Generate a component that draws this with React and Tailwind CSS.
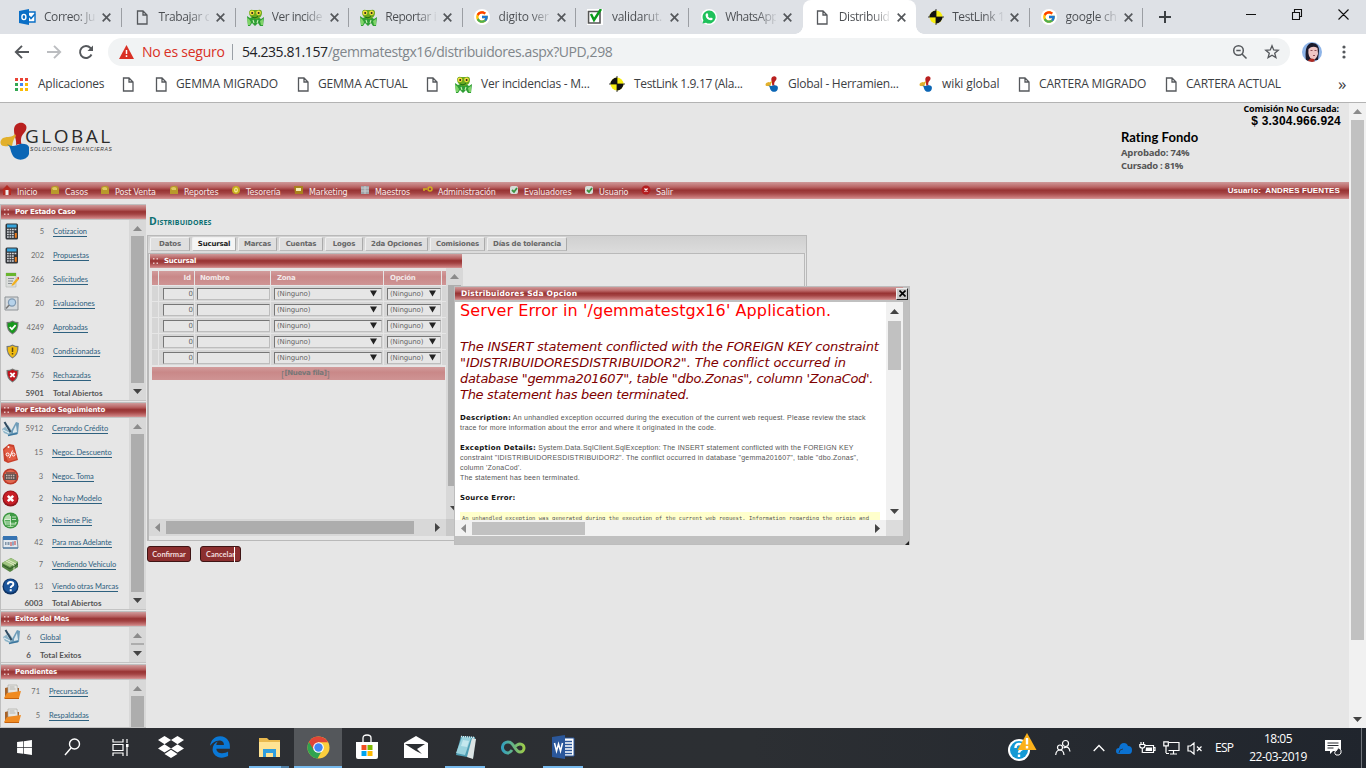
import React from "react";
import { FcGoogle } from "react-icons/fc";
import { FaDropbox, FaEdgeLegacy, FaWindows } from "react-icons/fa";

const BAR = "bg-[linear-gradient(to_bottom,#cf9a9a_0%,#b96464_30%,#983333_48%,#a34343_65%,#c87878_90%,#d49a9a_100%)]";

/* ---------- small drawings ---------- */

const Page = ({ className = "" }) => (
  <svg className={"shrink-0 " + className} width="12" height="15" viewBox="0 0 12 15" fill="none" stroke="#55585c" strokeWidth="1.3">
    <path d="M1.500 1h5.500l4 4v9H1.500zM7 1v4h4" />
  </svg>
);

const Frog = () => (
  <svg className="shrink-0" width="17" height="17" viewBox="0 0 17 17">
    <path d="M0 7l3 2 2-1h6l3 2 3-2-1 9h-3l-2-3-3 3-3-3-2 3H1z" fill="#2f9e35" />
    <path d="M0 9l2 1 2 3-1 3H1zM16 10l-3 2 1 4h2z" fill="#7fd469" />
    <path d="M2 3q1-3 4-2h5q4-1 4 3 0 5-6 6Q2 9 2 3z" fill="#6aa81e" />
    <circle cx="5" cy="3.8" r="2.400" fill="#f3dd3c" />
    <circle cx="11.500" cy="3.800" r="2.400" fill="#f3dd3c" />
    <circle cx="5.200" cy="4" r="1" fill="#222" />
    <circle cx="11.600" cy="4" r="1" fill="#222" />
    <path d="M5 8q3 2 6-.5" stroke="#176b17" fill="none" />
    <path d="M6 11l1 3M11 11l-1 3" stroke="#c9f0b8" strokeWidth="1.100" />
  </svg>
);

const Outlook = () => (
  <svg className="shrink-0" width="17" height="16" viewBox="0 0 17 16">
    <path d="M9 3h7v10H9z" fill="#fff" stroke="#0a6fc6" strokeWidth="1.4" />
    <path d="M10 7l2 2.5L16 5" stroke="#0a6fc6" strokeWidth="1.6" fill="none" />
    <path d="M0 2l10-2v16L0 14z" fill="#0a6fc6" />
    <ellipse cx="4.9" cy="8" rx="2" ry="2.6" fill="none" stroke="#fff" strokeWidth="1.4" />
  </svg>
);

const CheckIcon = () => (
  <svg className="shrink-0" width="16" height="16" viewBox="0 0 16 16">
    <path d="M0 0h16v16H0z" fill="#fff" />
    <path d="M1.5 2.5h11.5v11.500H1.500z" fill="#fff" stroke="#555" strokeWidth="1.6" />
    <path d="M4 5l3 6 7-11" fill="none" stroke="#0a9a1a" strokeWidth="2.4" />
  </svg>
);

const Whats = () => (
  <svg className="shrink-0" width="16" height="16" viewBox="0 0 16 16">
    <circle cx="8" cy="8" r="8" fill="#fff" />
    <path d="M8 1.500a6.500 6.500 0 1 1-3 12.200L1.500 14.500l.9-3.300A6.500 6.500 0 0 1 8 1.500z" fill="#1fc15b" />
    <path d="M5.200 4.500l1.300-.3.900 2-.7.900q.8 1.500 2.300 2.200l.9-.9 1.900 1q-.2 1.800-2 1.900Q5 10.500 4.600 6.200q0-1.200.6-1.700z" fill="#fff" />
  </svg>
);

const Target = () => (
  <svg className="shrink-0" width="16" height="16" viewBox="0 0 16 16">
    <circle cx="8" cy="8" r="6.500" fill="#f7ee12" />
    <path d="M8 8V1.500A6.500 6.500 0 0 0 1.500 8zM8 8v6.500A6.500 6.500 0 0 0 14.500 8z" fill="#111" />
    <path d="M8 0v16M0 8h16" stroke="#111" strokeWidth=".8" />
  </svg>
);

const GoogleIcon = () => (
  <span className="flex size-4 shrink-0 items-center justify-center rounded-full bg-white">
    <FcGoogle size={14} />
  </span>
);

const GlobalMark = ({ w = 15, h = 16 }) => (
  <svg className="shrink-0" width={w} height={h} viewBox="0 0 29 38">
    <path d="M14 8C14 2 19 0 23 1c5 2 4 7 1 10-3 3-4 7-2 13-2-2-4-2-6-1 1-5-2-9-2-15z" fill="#b9201f" />
    <path d="M15 12C12 16 8 14 3 16c-4 3-3 8 1 8 4 1 5-1 8 0 1-5 2-8 4-10z" fill="#e2b02c" />
    <path d="M7 22c4 3 9 2 13 0 9-1 11 4 9 10-2 7-14 8-17 0-2-4-1-7-5-10z" fill="#0b66b5" />
  </svg>
);

const Close = () => (
  <svg className="shrink-0" width="9" height="9" viewBox="0 0 9 9" stroke="#55585c" strokeWidth="1.7">
    <path d="M.7.7l7.600 7.600M8.300.7L.7 8.300" />
  </svg>
);

/* ---------- browser chrome ---------- */

const TABS = [
  ["Correo: Ju", Outlook, "tracking-[-0.45px]"],
  ["Trabajar c", Page, "tracking-[-0.4px]"],
  ["Ver incide", Frog, "tracking-[-0.5px]"],
  ["Reportar i", Frog, "tracking-[-0.45px]"],
  ["digito ver", GoogleIcon, "tracking-[-0.2px]"],
  ["validarut.", CheckIcon, "tracking-[-0.25px]"],
  ["WhatsApp", Whats, "tracking-[-0.6px]"],
  ["Distribuido", Page, "tracking-[-0.4px]", true],
  ["TestLink 1", Target, "tracking-[-0.4px]"],
  ["google ch", GoogleIcon, "tracking-[-0.25px]"],
];

function TabStrip() {
  return (
    <div className="flex h-[34px] shrink-0 bg-[#dee1e6] pl-[9px] font-['Open_Sans',sans-serif]">
      {TABS.map(([label, Icon, track, active], i) => (
        <div
          key={i}
          className={
            "relative flex h-[34px] w-[113.4px] shrink-0 items-center pl-[10px] " +
            (active ? "rounded-t-lg bg-white" : "")
          }
        >
          <span className={"flex w-[17px] justify-center " + (i > 0 ? "ml-px" : "")}><Icon /></span>
          <span className={"ml-[8px] w-[51px] overflow-hidden whitespace-nowrap bg-[linear-gradient(to_right,#4a4d51_62%,rgba(74,77,81,0.1))] bg-clip-text text-[12px] leading-[18px] text-transparent " + track}>
            {label}
          </span>
          <span className="ml-[7px]"><Close /></span>
          {!active && i !== 6 && <span className="absolute right-[0px] top-[8px] h-[19px] w-px bg-[#9b9ea3]" />}
          {active && (
            <>
              <span className="absolute -left-2 bottom-0 size-2 bg-[radial-gradient(circle_at_0_0,#dee1e6_7.5px,#fff_8px)]" />
              <span className="absolute -right-2 bottom-0 size-2 bg-[radial-gradient(circle_at_100%_0,#dee1e6_7.5px,#fff_8px)]" />
            </>
          )}
        </div>
      ))}
      <svg className="ml-[16px] mt-[11px]" width="12" height="12" stroke="#3c4043" strokeWidth="2">
        <path d="M6 0v12M0 6h12" />
      </svg>
      <svg className="ml-auto mr-[16px] mt-[9px]" width="104" height="12" fill="none" stroke="#111" strokeWidth="1.1">
        <path d="M0 5.500h10M46.500 3.500h7v7h-7zM48.500 3V.500h7v7h-2.500M92.500.5l10 10M102.500.5l-10 10" />
      </svg>
    </div>
  );
}

function Toolbar() {
  return (
    <div className="flex h-[36px] shrink-0 items-center bg-white font-['Open_Sans',sans-serif]">
      <svg className="ml-[14px] shrink-0" width="82" height="16" viewBox="0 0 82 16" fill="none" strokeWidth="1.9">
        <path d="M15 8H2M8 1.800L1.800 8 8 14.200" stroke="#55585c" />
        <path d="M33 8h13M40 1.800L46.200 8 40 14.200" stroke="#bbbdc0" />
        <path d="M77.500 10.500A6 6 0 1 1 76.500 4l1.500 1.600" stroke="#55585c" />
        <path d="M79 1.500v5.500h-5.500z" fill="#55585c" stroke="none" />
      </svg>
      <div className="ml-[12px] flex h-[28px] w-[1182px] items-center rounded-full bg-[#f1f3f4] pl-[11px] text-[14px] leading-[20px]">
        <svg className="shrink-0" width="15" height="14" viewBox="0 0 15 14">
          <path d="M7.500 0L15 14H0z" fill="#d93025" />
          <path d="M7.500 5v4M7.500 10.300v1.600" stroke="#fff" strokeWidth="1.500" />
        </svg>
        <span className="ml-[8px] w-[90px] whitespace-nowrap tracking-[-0.25px] text-[#d93025]">No es seguro</span>
        <span className="h-[16px] w-px bg-[#9aa0a6]" />
        <span className="ml-[9px] whitespace-nowrap tracking-[-0.42px] text-[#202124]">
          54.235.81.157<span className="text-[#80868b]">/gemmatestgx16/distribuidores.aspx?UPD,298</span>
        </span>
        <svg className="ml-auto mr-[10px] shrink-0" width="48" height="16" viewBox="0 0 48 16" fill="none" stroke="#55585c" strokeWidth="1.500">
          <circle cx="6.500" cy="6.500" r="4.800" />
          <path d="M10 10l4.500 4.500M4.300 6.500h4.400" />
          <path d="M40 1.800l1.700 4.200 4.500.3-3.500 2.900 1.200 4.400L40 11.200l-3.900 2.400 1.200-4.400-3.500-2.900 4.500-.3z" strokeWidth="1.300" />
        </svg>
      </div>
      <svg className="ml-[12px] shrink-0" width="20" height="20" viewBox="0 0 20 20">
        <defs><clipPath id="face"><circle cx="10" cy="10" r="10" /></clipPath></defs>
        <g clipPath="url(#face)">
          <path d="M0 0h20v20H0z" fill="#8eb4e8" />
          <path d="M4 19Q2 3 9 1q8-1 8 8l-1 9z" fill="#1b1a2b" />
          <path d="M6.500 7q4-4 9-1l.5 6q-2 6-5.500 6-5-3-4-11z" fill="#f0c6c4" />
          <path d="M5 20q3-5 7-3l1 3z" fill="#b02a20" />
          <path d="M8.500 8.500h2M12.500 8.500h2M11 13.500h2" stroke="#73343a" strokeWidth=".8" />
        </g>
      </svg>
      <svg className="ml-[20px] shrink-0" width="4" height="14" fill="#55585c">
        <circle cx="2" cy="2" r="1.600" /><circle cx="2" cy="7" r="1.600" /><circle cx="2" cy="12" r="1.600" />
      </svg>
    </div>
  );
}

const BOOKMARKS = [
  [Page, "", "w-[33px]", ""],
  [Page, "GEMMA MIGRADO", "w-[142px]", "tracking-[-0.12px]"],
  [Page, "GEMMA ACTUAL", "w-[129px]", "tracking-[-0.2px]"],
  [Page, "", "w-[29px]", ""],
  [Frog, "Ver incidencias - M...", "w-[154px]", "tracking-[-0.25px]"],
  [Target, "TestLink 1.9.17 (Ala...", "w-[155px]", "tracking-[-0.35px]"],
  [GlobalMark, "Global - Herramien...", "w-[154px]", "tracking-[-0.25px]"],
  [GlobalMark, "wiki global", "w-[100px]", "tracking-[-0.1px]"],
  [Page, "CARTERA MIGRADO", "w-[147px]", "tracking-[-0.18px]"],
  [Page, "CARTERA ACTUAL", "w-[147px]", "tracking-[-0.25px]"],
];

function Bookmarks() {
  return (
    <div className="flex h-[33px] shrink-0 items-center border-b border-[#b3b3b3] bg-white pb-[4px] pl-[15px] font-['Open_Sans',sans-serif] text-[12px] leading-[18px] text-[#3c4043]">
      <svg className="shrink-0" width="13" height="13">
        <path d="M0 0h3v3H0zM5 0h3v3H5zM10 0h3v3h-3z" fill="#ea4335" />
        <path d="M0 5h3v3H0z" fill="#34a853" /><path d="M5 5h3v3H5z" fill="#4285f4" /><path d="M10 5h3v3h-3zM5 10h3v3H5zM10 10h3v3h-3z" fill="#fbbc05" />
        <path d="M0 10h3v3H0z" fill="#34a853" />
      </svg>
      <span className="ml-[10px] w-[84px] tracking-[-0.25px]">Aplicaciones</span>
      {BOOKMARKS.map(([Icon, label, w, track], i) => (
        <span key={i} className={"flex shrink-0 items-center gap-[9px] whitespace-nowrap " + w}>
          <Icon />
          <span className={track}>{label}</span>
        </span>
      ))}
      <span className="ml-[26px] text-[17px] leading-[18px]">»</span>
    </div>
  );
}

/* ---------- scroll bars ---------- */

const Arrow = ({ dir, dim }) => {
  const d = { up: "M0 6l4.500-5L9 6z", down: "M0 1l4.500 5L9 1z", left: "M6 0L1 4.500 6 9z", right: "M1 0l5 4.500L1 9z" }[dir];
  const vertical = dir === "up" || dir === "down";
  return (
    <svg className="shrink-0" width={vertical ? 9 : 7} height={vertical ? 7 : 9}>
      <path d={d} fill={dim ? "#8b8b8b" : "#444"} />
    </svg>
  );
};

const SideScroll = ({ cut }) => (
  <div className="flex w-[17px] shrink-0 flex-col items-center bg-[#d8d8d8]">
    <span className="flex h-[16px] shrink-0 items-center"><Arrow dir="up" dim /></span>
    <span className="w-[13px] flex-1 bg-[#adadad]" />
    {!cut && <span className="flex h-[17px] shrink-0 items-center"><Arrow dir="down" /></span>}
  </div>
);

/* ---------- side panels ---------- */

const Calc = () => (
  <svg width="14" height="17" viewBox="0 0 14 17">
    <rect x=".5" y=".5" width="12.500" height="16" rx="1.500" fill="#33363a" />
    <path d="M2 1.500h9.500v3H2z" fill="#35a4dc" />
    <path d="M2 6.500h9.500M2 9h7M2 11.500h7M2 14h7" stroke="#d5d8db" strokeWidth="1.500" strokeDasharray="1.800 .7" />
    <path d="M9.800 10h2v4.800h-2z" fill="#ee7b1c" />
  </svg>
);
const Note = () => (
  <svg width="14" height="16" viewBox="0 0 14 16">
    <path d="M1 1h10v14H1z" fill="#dcdedc" stroke="#b2b6b2" strokeWidth=".6" />
    <path d="M1 1h10v3H1z" fill="#6ab52e" />
    <path d="M3 6.500h6M3 9h5M3 11.500h4" stroke="#8b9094" />
    <path d="M7 12l5-6 1.800 1.500L9 13l-2.500 1z" fill="#f2b01e" />
    <path d="M12 6l1-1.200L15 6l-1.200 1.500z" fill="#d4473c" />
  </svg>
);
const Magnify = () => (
  <svg width="15" height="15" viewBox="0 0 15 15">
    <path d="M1 1h13v13H1z" fill="#d6dadd" stroke="#8d9296" />
    <circle cx="8" cy="6.500" r="3.600" fill="#b6d2ea" stroke="#7d98b2" strokeWidth="1.200" />
    <path d="M5.300 9L2 12.500" stroke="#777" strokeWidth="1.600" />
  </svg>
);
const Shield = ({ color, children }) => (
  <svg width="13" height="15" viewBox="0 0 13 15">
    <path d="M6.500.5Q9 2 12.500 2q.5 9-6 12.500Q0 11 .5 2 4 2 6.500.5z" fill="#767976" />
    <path d="M6.500 1.800Q8.500 3 11.300 3.200q.2 7-4.800 10Q1.500 10.200 1.700 3.200 4.500 3 6.500 1.800z" fill={color} />
    {children}
  </svg>
);
const ShieldOk = () => <Shield color="#17981c"><path d="M3.700 7l2.200 2.200 3.700-4" stroke="#fff" strokeWidth="1.700" fill="none" /></Shield>;
const ShieldWarn = () => <Shield color="#f0bb12"><path d="M6.500 3.500v4.500M6.500 9v1.600" stroke="#5a4510" strokeWidth="1.500" /></Shield>;
const ShieldNo = () => <Shield color="#c1121b"><path d="M4.300 4.800l4.400 4.400M8.700 4.800L4.300 9.200" stroke="#fff" strokeWidth="1.800" /></Shield>;
const Pen = () => (
  <svg width="17" height="16" viewBox="0 0 17 16">
    <path d="M0 8l6-4 4 6 5 2-8 2-5-2z" fill="#8db4c8" />
    <path d="M9 10l5-9 3 1-1 11-8 1z" fill="#6f9cb8" />
    <path d="M11 10l3-6 1 7-4 1z" fill="#dbe8ee" />
    <path d="M1 9l6 3M4 6l4 5" stroke="#eaf3f7" />
    <path d="M2.500 1l6 10" stroke="#2f4a60" strokeWidth="2" />
    <path d="M6 14.500l9-2" stroke="#3c779e" strokeWidth="1.300" />
  </svg>
);
const Percent = () => (
  <svg width="17" height="20" viewBox="0 0 17 20">
    <path d="M1 6L7 1l5 1 4 15-10 3-4-2z" fill="#c9402c" />
    <path d="M2 7l5-4 4 1 3.500 12L6 18.500z" fill="#e35c43" />
    <circle cx="6.500" cy="4" r="1" fill="#fff" />
    <path d="M10.500 7.500L7.500 15" stroke="#fff" /><circle cx="5.600" cy="11.500" r="1.500" fill="none" stroke="#fff" /><circle cx="11.500" cy="11.500" r="1.500" fill="none" stroke="#fff" />
  </svg>
);
const Deal = () => (
  <svg width="17" height="17" viewBox="0 0 17 17">
    <circle cx="8.500" cy="8.500" r="8" fill="#bd3928" />
    <circle cx="8.500" cy="8.500" r="6.500" fill="#e06850" />
    <path d="M2.500 6h12v6h-12z" fill="#5d5250" />
    <path d="M4 7.500h9M4 10h9" stroke="#cdb6b0" strokeWidth="1.400" strokeDasharray="1.500 .8" /><path d="M4 5h9" stroke="#444" />
  </svg>
);
const RoundNo = () => (
  <svg width="17" height="17" viewBox="0 0 17 17">
    <circle cx="8.500" cy="8.500" r="8" fill="#8f141b" /><circle cx="8.500" cy="8" r="6.800" fill="#c81f27" />
    <path d="M5.800 5.800l5.400 5.400M11.200 5.800l-5.400 5.400" stroke="#fff" strokeWidth="2.600" />
  </svg>
);
const Coins = () => (
  <svg width="17" height="17" viewBox="0 0 17 17">
    <circle cx="8.500" cy="8.500" r="8" fill="#3a963f" /><circle cx="8.500" cy="8.500" r="6.600" fill="#b4dcae" />
    <path d="M8 2h5q3 3 2 8H8z" fill="#3f9a45" />
    <path d="M3 8h5v6H4zM9 10h4v4H9z" fill="#57ab5a" />
    <path d="M2.500 7.500h6M3 10h5M3 12h10M8.500 4v8M10 5h4M10 7.500h4" stroke="#e4f4e2" strokeWidth=".8" />
  </svg>
);
const Cal = () => (
  <svg width="17" height="15" viewBox="0 0 17 15">
    <path d="M1 2h14l1 11H1z" fill="#e2e8ee" stroke="#7d90a3" /><path d="M1 1h14v4H1z" fill="#3673b2" />
    <path d="M3 8.500h5" stroke="#8094a8" strokeWidth="3" strokeDasharray="1 .5" /><path d="M9 7v4M13 6v4" stroke="#c73737" strokeWidth="1" /><path d="M11 6.500v4" stroke="#36679a" /><path d="M1 13h15" stroke="#356d9e" />
  </svg>
);
const Cash = () => (
  <svg width="17" height="15" viewBox="0 0 17 15">
    <path d="M0 6l9-5 7 4v5l-8 5-8-5z" fill="#548340" /><path d="M0 6l9-5 7 4-8 5z" fill="#a2c682" />
    <path d="M4 4l8 4v5M6 3l8 4" stroke="#e2edc8" fill="none" /><path d="M1 8l7 4 8-5" stroke="#2f5d26" fill="none" />
  </svg>
);
const Ask = () => (
  <svg width="17" height="17" viewBox="0 0 17 17">
    <circle cx="8.500" cy="8.500" r="8" fill="#0e3465" /><circle cx="8.500" cy="8" r="6.800" fill="#1b559b" />
    <path d="M5.800 6.500q0-2.600 2.800-2.600t2.700 2.300q0 1.300-1.500 2-1.100.6-1.100 1.900M8.700 11.300v2" fill="none" stroke="#fff" strokeWidth="2" />
  </svg>
);
const Folder = () => (
  <svg width="17" height="16" viewBox="0 0 17 16">
    <path d="M1 4l4-1 1 1h9v10H1z" fill="#a7632a" /><path d="M4 1h9l1 8H4z" fill="#e6e6e3" stroke="#a5a5a0" strokeWidth=".6" />
    <path d="M5.500 3h5M5.500 5h6" stroke="#b5b5b0" /><path d="M0 14l3-5 14-2-2 7z" fill="#f08b22" /><path d="M0 14h15v1H1z" fill="#c4610d" />
  </svg>
);

const SIDE = [
  {
    title: "Por Estado Caso", height: "h-[182px]", num: "w-[25px]", icon: "w-[18px] justify-end", total: ["5901", "Total Abiertos", "h-[10px]"],
    rows: [[Calc, 5, "Cotizacion"], [Calc, 202, "Propuestas"], [Note, 266, "Solicitudes"], [Magnify, 20, "Evaluaciones"], [ShieldOk, 4249, "Aprobadas"], [ShieldWarn, 403, "Condicionadas"], [ShieldNo, 756, "Rechazadas"]],
  },
  {
    title: "Por Estado Seguimiento", height: "h-[193px]", num: "w-[24px]", icon: "w-[18px] justify-end", total: ["6003", "Total Abiertos", "h-[9px]"],
    rows: [[Pen, 5912, "Cerrando Crédito", "h-[22px]"], [Percent, 15, "Negoc. Descuento", "h-[26px]"], [Deal, 3, "Negoc. Toma", "h-[22px]"], [RoundNo, 2, "No hay Modelo", "h-[22px]"], [Coins, 9, "No tiene Pie", "h-[22px]"], [Cal, 42, "Para mas Adelante", "h-[22px]"], [Cash, 7, "Vendiendo Vehiculo", "h-[22px]"], [Ask, 13, "Viendo otras Marcas", "h-[22px]"]],
  },
  {
    title: "Exitos del Mes", height: "h-[37px]", num: "w-[11px]", icon: "w-[19px] justify-end", total: ["6", "Total Exitos", "h-[14px]"],
    rows: [[Pen, 6, "Global", "h-[21px]"]],
  },
  {
    title: "Pendientes", height: "h-[49px]", num: "w-[19px]", icon: "w-[20px] justify-end", cut: true,
    rows: [[Folder, 71, "Precursadas"], [Folder, 5, "Respaldadas"]],
  },
];

const Grip = () => (
  <svg className="ml-[3px] mr-[6px]" width="5" height="7" fill="#e7c4c4"><path d="M0 0h1.500v1.500H0zM3.500 0H5v1.500H3.500zM0 4.500h1.500V6H0zM3.500 4.500H5V6H3.500z" /></svg>
);

function Sidebar() {
  return (
    <div className="flex w-[146px] shrink-0 flex-col pt-[5px]">
      {SIDE.map((p) => (
        <div key={p.title} className="flex shrink-0 flex-col border-l border-t border-[#bfbfbf]">
          <div className={"flex h-[14px] items-center font-['DejaVu_Sans',sans-serif] text-[7px] font-bold leading-[10px] tracking-[-0.22px] text-white " + BAR}>
            <Grip />{p.title}
          </div>
          <div className={"mb-px flex overflow-hidden border-b border-t border-[#c4c4c4] " + p.height}>
            <div className="flex w-[128px] flex-col font-['Lato',sans-serif] text-[7.5px] leading-[10px]">
              {p.rows.map(([Icon, n, label, h]) => (
                <div key={label} className={"flex shrink-0 items-center " + (h || "h-[24px]")}>
                  <span className={"-mt-px flex " + p.icon}><Icon /></span>
                  <span className={"text-right text-[#6e6e6e] " + p.num}>{n}</span>
                  <span className="pl-[9px]"><span className="whitespace-nowrap border-b border-[#2e617f] tracking-[-0.06px] text-[#2e617f]">{label}</span></span>
                </div>
              ))}
              {p.total && (
                <div className={"flex shrink-0 items-center text-[8px] font-bold text-[#555] " + p.total[2]}>
                  <span className={p.icon} />
                  <span className={"flex justify-end " + p.num}>{p.total[0]}</span>
                  <span className="pl-[9px]">{p.total[1]}</span>
                </div>
              )}
            </div>
            <SideScroll cut={p.cut} />
          </div>
        </div>
      ))}
    </div>
  );
}

/* ---------- header and menu ---------- */

const mi = {
  home: <><path d="M0 5l5-5 5 5-1 1v4H1V6z" fill="#b52a22" /><path d="M3.500 5h3v5h-3z" fill="#eee" /></>,
  bag: <><path d="M1 4q0-3 3-3 5-1 5 3v5H1z" fill="#b8992a" /><path d="M2 3q3-2 5 0v2H3z" fill="#dfc960" /></>,
  coin: <><circle cx="5" cy="5" r="4" fill="#c6ad1d" /><ellipse cx="5" cy="5" rx="1.300" ry="2" fill="none" stroke="#fdf3a0" strokeWidth="1.100" /></>,
  card: <><path d="M0 1h9v8H1z" fill="#a9811c" /><path d="M2 3h5v3H2z" fill="#f7eeb2" /></>,
  db: <><path d="M1 1h8v8H1z" fill="#9fa4a8" /><path d="M1 3h8M1 6h8M5 1v8" stroke="#c9cdd0" /></>,
  key: <path d="M0 4h4M1 4v2M9 4a2 2 0 1 1-4 0 2 2 0 0 1 4 0z" fill="none" stroke="#d0ad1e" strokeWidth="1.500" />,
  eval: <><rect x="1" y="1" width="8" height="8" rx="2" fill="#d6ddd8" /><path d="M3 5l2 2 3-4" stroke="#3a9340" strokeWidth="1.800" fill="none" /></>,
  exit: <><circle cx="5" cy="5" r="4.500" fill="#b51e20" /><path d="M3.500 3.500l3 3M6.500 3.500l-3 3" stroke="#fff" strokeWidth="1.200" /></>,
};
const MENU = [
  ["home", "Inicio", "w-[48px]"], ["bag", "Casos", "w-[50px]"], ["bag", "Post Venta", "w-[69px]"], ["bag", "Reportes", "w-[62px]"],
  ["coin", "Tesorería", "w-[63px]"], ["card", "Marketing", "w-[66px]"], ["db", "Maestros", "w-[63px]"], ["key", "Administración", "w-[86px]"],
  ["eval", "Evaluadores", "w-[75px]"], ["eval", "Usuario", "w-[57px]"], ["exit", "Salir", "w-[40px]"],
];

function Header() {
  return (
    <>
      <div className="flex h-[79px] shrink-0 justify-between">
        <div className="flex pt-[19px]">
          <GlobalMark w={29} h={38} />
          <div className="-ml-[4px] mt-[4px] flex flex-col">
            <span className="font-['Open_Sans',sans-serif] text-[19px] leading-[20px] tracking-[2.5px] text-[#2b2b2b]">GLOBAL</span>
            <span className="ml-[5px] whitespace-nowrap font-['Liberation_Sans',sans-serif] text-[5px] italic leading-[6px] tracking-[0.67px] text-[#333]">SOLUCIONES FINANCIERAS</span>
          </div>
        </div>
        <div className="flex w-[228px] flex-col whitespace-nowrap font-['Open_Sans',sans-serif] font-bold">
          <span className="mr-[10px] self-end text-[9px] leading-[12px] tracking-[-0.15px] text-black">Comisión No Cursada:</span>
          <span className="mr-[8px] self-end font-['Liberation_Sans',sans-serif] text-[12px] leading-[12px] tracking-[0.2px] text-black">$ 3.304.966.924</span>
          <span className="mt-[2px] font-['Lato',sans-serif] text-[13px] leading-[16px] tracking-[0.05px] text-black">Rating Fondo</span>
          <span className="mt-px text-[9.5px] leading-[13px] tracking-[-0.2px] text-[#555]">Aprobado: 74%</span>
          <span className="text-[9.5px] leading-[13px] tracking-[-0.3px] text-[#555]">Cursado : 81%</span>
        </div>
      </div>
      <div className={"flex h-[17px] shrink-0 items-center pl-[2px] font-['DejaVu_Sans',sans-serif] text-[8px] leading-[10px] text-[#f7eded] " + BAR}>
        {MENU.map(([icon, label, w], i) => (
          <span key={label + i} className={"flex h-[15px] shrink-0 whitespace-nowrap " + w}>
            <svg className="mr-[5px] mt-[2px] shrink-0" width="10" height="10">{mi[icon]}</svg>
            <span className="pt-[5px] tracking-[-0.15px]">{label}</span>
          </span>
        ))}
        <span className="ml-auto mr-[9px] whitespace-pre font-['Liberation_Sans',sans-serif] font-bold tracking-[0.1px] text-white">Usuario:  ANDRES FUENTES</span>
      </div>
    </>
  );
}

/* ---------- main form ---------- */

const FORM_TABS = [
  ["Datos", "w-[40px]"], ["Sucursal", "w-[44px]"], ["Marcas", "w-[39px]"], ["Cuentas", "w-[44px]"], ["Logos", "w-[38px]"],
  ["2da Opciones", "w-[63px]"], ["Comisiones", "w-[55px]"], ["Días de tolerancia", "w-[80px]"],
];
const inset = "h-[12px] border border-b-[#bdbdbd] border-l-[#767676] border-r-[#bdbdbd] border-t-[#767676] bg-[#e6e6e6]";

const Select = ({ w }) => (
  <span className={"flex items-center justify-between pl-[2px] pr-[4px] tracking-[-0.15px] " + inset + " " + w}>
    (Ninguno)
    <svg width="7" height="7"><path d="M0 .5h7L3.500 6.500z" fill="#222" /></svg>
  </span>
);

function Grid() {
  return (
    <div className="flex w-[297px] shrink-0 flex-col pl-[3px] pt-[3px] font-['DejaVu_Sans',sans-serif] text-[7px] leading-[10px] text-[#666]">
      <div className="flex h-[14px] gap-px font-bold text-[#f2e8e8] *:bg-[linear-gradient(to_bottom,#d29c9c,#c98888_40%,#cf9494)] *:pt-[2px]">
        <span className="w-[6px]" />
        <span className="w-[35px] pr-[3px] text-right">Id</span>
        <span className="w-[75px] pl-[5px] tracking-[-0.3px]">Nombre</span>
        <span className="w-[112px] pl-[6px] tracking-[-0.3px]">Zona</span>
        <span className="w-[57px] pl-[6px] tracking-[-0.3px]">Opción</span>
        <span className="w-[4px]" />
      </div>
      {[0, 1, 2, 3, 4].map((r) => (
        <div key={r} className="mt-px flex h-[15px] gap-px *:flex *:items-center *:bg-[#d6d6d6]">
          <span className="w-[6px]" />
          <span className="w-[35px] pl-[4px]"><span className={"flex w-[31px] items-center justify-end " + inset}>0</span></span>
          <span className="w-[75px] pl-[2px]"><span className={"w-[73px] " + inset} /></span>
          <span className="w-[112px] pl-[3px]"><Select w="w-[108px]" /></span>
          <span className="w-[57px] pl-[3px]"><Select w="w-[54px]" /></span>
          <span className="w-[4px]" />
        </div>
      ))}
      <div className="mt-[2px] flex h-[13px] w-[293px] items-center justify-center bg-[linear-gradient(to_bottom,#d29c9c,#c98888_40%,#cf9494)] pl-[14px] text-[7px] font-bold text-[#777]">
        <span className="mt-[4px] text-[8px] font-normal">[</span><span className="-mt-px tracking-[-0.35px]">[Nueva fila]</span><span className="mt-[4px] text-[8px] font-normal">]</span>
      </div>
    </div>
  );
}

function Form() {
  return (
    <div className="flex flex-col pl-px pt-[16px]">
      <h1 className="ml-[2px] font-['Open_Sans',sans-serif] text-[10.5px] font-bold leading-[12px] tracking-[0.15px] text-[#0b6f72] [font-variant:small-caps]">Distribuidores</h1>
      <div className="mt-[8px] flex h-[306px] w-[660px] flex-col border border-[#b9b9b9]">
        <div className="flex h-[17px] shrink-0 gap-[2px] bg-[linear-gradient(to_bottom,#d0d0d0,#dcdcdc)] pl-[2px] pt-px font-['DejaVu_Sans',sans-serif] text-[7px] font-bold leading-[12px] text-[#666]">
          {FORM_TABS.map(([t, w], i) => (
            <span key={t} className={"h-[14px] shrink-0 whitespace-nowrap rounded-t-[2px] border border-b-[#bbb] border-l-[#f0f0f0] border-r-[#aaa] border-t-[#f0f0f0] text-center tracking-[-0.2px] " + w + (i === 1 ? " bg-[#f5f5f5] text-[#222]" : " bg-[#dfdfdf]")}>{t}</span>
          ))}
        </div>
        <div className="mr-px flex flex-1 flex-col border-l border-r border-t border-[#b9b9b9]">
          <div className={"ml-px flex h-[14px] w-[312px] shrink-0 items-center font-['DejaVu_Sans',sans-serif] text-[7px] font-bold leading-[10px] tracking-[-0.2px] text-white " + BAR}>
            <Grip />Sucursal
          </div>
          <div className="flex h-[251px] shrink-0">
            <Grid />
            <div className="flex w-[17px] flex-col items-center bg-[#d8d8d8]">
              <span className="flex h-[17px] items-center"><Arrow dir="up" dim /></span>
              <span className="h-[201px] w-[13px] bg-[#adadad]" />
              <span className="mt-[19px]"><Arrow dir="down" /></span>
            </div>
          </div>
          <div className="flex h-[17px] w-[314px] shrink-0 items-center bg-[#d8d8d8]">
            <span className="ml-[5px]"><Arrow dir="left" dim /></span>
            <span className="ml-[5px] h-[13px] w-[248px] bg-[#adadad]" />
            <span className="ml-[20px]"><Arrow dir="right" /></span>
            <span className="ml-auto h-[17px] w-[17px] bg-[#c8c8c8]" />
          </div>
        </div>
      </div>
      <div className="mt-[5px] flex gap-[9px] font-['Lato',sans-serif] text-[7.5px] font-bold leading-[13px] text-[#f1dede]">
        <span className="flex h-[16px] w-[44px] items-center justify-center rounded-[3px] border border-[#3f1515] bg-[#8c2f2f]">Confirmar</span>
        <span className="relative flex h-[16px] w-[41px] items-center justify-center rounded-[3px] border border-[#3f1515] bg-[#8c2f2f]">Cancelar<span className="absolute left-[33px] top-0 h-[16px] w-px bg-white" /></span>
      </div>
    </div>
  );
}

/* ---------- error window ---------- */

function Popup() {
  const b = "font-['DejaVu_Sans',sans-serif] font-bold text-[#111] tracking-[0.25px]";
  return (
    <div className="absolute left-[454px] top-[183px] flex h-[259px] w-[456px] flex-col border border-[#bdbdbd] bg-[#c0c0c0] pr-[6px]">
      <div className={"flex h-[13px] shrink-0 items-center pl-[6px] font-['DejaVu_Sans',sans-serif] text-[7.5px] font-bold leading-[10px] text-white " + BAR}>
        <span className="tracking-[0.23px]">Distribuidores Sda Opcion</span>
        <span className="-mr-[5px] ml-auto flex size-[12px] items-center justify-center border border-b-[#222] border-l-[#eee] border-r-[#222] border-t-[#eee] bg-[#c8c8c8]">
          <svg width="7" height="7" stroke="#000" strokeWidth="1.600"><path d="M.5.5l6 6M6.500.5l-6 6" /></svg>
        </span>
      </div>
      <div className="mt-[2px] flex h-[218px] shrink-0">
        <div className="w-[431px] overflow-hidden whitespace-nowrap bg-white pl-[5px]">
          <div className="font-['DejaVu_Sans',sans-serif] text-[16px] leading-[17px] tracking-[0.1px] text-[#f00]">Server Error in '/gemmatestgx16' Application.</div>
          <div className="mt-[20px] font-['DejaVu_Sans',sans-serif] text-[13px] italic leading-[16px] text-[#800000]">
            <div className="tracking-[-0.22px]">The INSERT statement conflicted with the FOREIGN KEY constraint</div>
            <div className="tracking-[-0.09px]">"IDISTRIBUIDORESDISTRIBUIDOR2". The conflict occurred in</div>
            <div className="tracking-[-0.3px]">database "gemma201607", table "dbo.Zonas", column 'ZonaCod'.</div>
            <div className="tracking-[-0.3px]">The statement has been terminated.</div>
          </div>
          <div className="mt-[10px] font-['Liberation_Sans',sans-serif] text-[7px] leading-[10px] tracking-[0.22px] text-[#555]">
            <div><span className={b}>Description:</span> An unhandled exception occurred during the execution of the current web request. Please review the stack</div>
            <div>trace for more information about the error and where it originated in the code.</div>
            <div className="mt-[10px]"><span className={b}>Exception Details:</span> System.Data.SqlClient.SqlException: The INSERT statement conflicted with the FOREIGN KEY</div>
            <div>constraint "IDISTRIBUIDORESDISTRIBUIDOR2". The conflict occurred in database "gemma201607", table "dbo.Zonas",</div>
            <div>column 'ZonaCod'.</div>
            <div>The statement has been terminated.</div>
            <div className={"mt-[10px] " + b}>Source Error:</div>
          </div>
          <div className="mr-[6px] mt-[9px] h-[10px] bg-[#ffffcc] pl-[2px] font-['DejaVu_Sans_Mono',monospace] text-[5.5px] leading-[12px] tracking-[0.025px] text-[#555]">An unhandled exception was generated during the execution of the current web request. Information regarding the origin and</div>
        </div>
        <div className="flex w-[17px] flex-col items-center bg-[#f1f1f1]">
          <span className="flex h-[19px] items-center"><Arrow dir="up" /></span>
          <span className="h-[49px] w-[13px] bg-[#c1c1c1]" />
          <span className="mb-[5px] mt-auto"><Arrow dir="down" /></span>
        </div>
      </div>
      <div className="flex h-[16px] w-[448px] shrink-0 items-center bg-[#f1f1f1]">
        <span className="ml-[5px]"><Arrow dir="left" dim /></span>
        <span className="ml-[5px] h-[13px] w-[113px] bg-[#c1c1c1]" />
        <span className="ml-auto mr-[5px]"><Arrow dir="right" /></span>
        <span className="h-full w-[17px] bg-[#dcdcdc]" />
      </div>
      <svg className="absolute bottom-[-1px] right-0" width="4" height="4"><path d="M4 0v4H0z" fill="#222" /></svg>
    </div>
  );
}

/* ---------- taskbar ---------- */

const Cell = ({ children, w = "w-[49px]", under = "", active = false }) => (
  <span className={"flex h-[40px] shrink-0 flex-col items-center " + w + (active ? " bg-[#54575b]" : "")}>
    <span className="flex flex-1 items-center justify-center">{children}</span>
    <span className={"h-[2px] " + (under || "w-0")} />
  </span>
);

function Taskbar() {
  return (
    <div className="flex h-[40px] shrink-0 items-center bg-[linear-gradient(to_right,#2c2e33,#2c2f33_55%,#20252d)] text-white">
      <Cell w="w-[48px]"><FaWindows size={17} /></Cell>
      <Cell w="w-[48px]">
        <svg width="18" height="20" viewBox="0 0 18 20" fill="none" stroke="#fff" strokeWidth="1.400"><circle cx="11.500" cy="7" r="5" /><path d="M8 11L2 18" /></svg>
      </Cell>
      <Cell w="w-[49px]">
        <svg width="17" height="17" viewBox="0 0 17 17" fill="none" stroke="#fff" strokeWidth="1.200"><path d="M1 0v3h10V0M1 17v-3h10v3M1 5.500h10v6H1zM15 0v4M15 7v10" /><path d="M14 5h2.500v3H14z" fill="#fff" stroke="none" /></svg>
      </Cell>
      <Cell w="w-[51px]"><FaDropbox size={26} /></Cell>
      <Cell w="w-[48px]"><FaEdgeLegacy size={22} color="#0a78d6" /></Cell>
      <Cell w="w-[50px]" under="w-[40px] border-r-8 border-[#4f7fa6] bg-[#76b9ed]">
        <svg width="23" height="22" viewBox="0 0 23 22"><path d="M1 2h8l2 2h11v17H1z" fill="#e9b94e" /><path d="M1 6h21v15H1z" fill="#ffe393" /><path d="M5 21v-8h13v8h-3v-4H8v4z" fill="#2f9ede" /></svg>
      </Cell>
      <Cell w="w-[48px]" under="w-[48px] bg-[#76b9ed]" active>
        <svg width="23" height="23" viewBox="0 0 24 24">
          <circle cx="12" cy="12" r="11.500" fill="#fbce3d" />
          <path d="M12 12L2 6.200A11.500 11.500 0 0 0 11 23.500l5-9z" fill="#30a350" />
          <path d="M12 6.500h10A11.500 11.500 0 0 0 2 6.200l5 8.300z" fill="#e04536" />
          <circle cx="12" cy="12" r="5.600" fill="#fff" /><circle cx="12" cy="12" r="4.400" fill="#4285f4" />
        </svg>
      </Cell>
      <Cell w="w-[49px]">
        <svg width="24" height="26" viewBox="0 0 24 26"><path d="M1 8h22v15q0 2-2 2H3q-2 0-2-2z" fill="#fff" /><path d="M8 8V4q0-3 4-3t4 3v4" fill="none" stroke="#fff" strokeWidth="1.300" /><path d="M6.500 11h5v5h-5z" fill="#f25022" /><path d="M12.500 11h5v5h-5z" fill="#7fba00" /><path d="M6.500 17h5v5h-5z" fill="#00a4ef" /><path d="M12.500 17h5v5h-5z" fill="#ffb900" /></svg>
      </Cell>
      <Cell w="w-[50px]">
        <svg width="24" height="22" viewBox="0 0 24 22"><path d="M0 7l12-7 12 7v15H0z" fill="#fff" /><path d="M1 8h20l-8 5 5 5-6-3z" fill="#2c2f33" /></svg>
      </Cell>
      <Cell w="w-[48px]" under="w-[40px] bg-[#76b9ed]">
        <svg width="23" height="24" viewBox="0 0 23 24"><path d="M7 1l14 1-2 21-17-3z" fill="#4d9db3" /><path d="M8 2l9 1-6 17-9-2z" fill="#9bd3de" /><path d="M9 5l6 1-2 6-6-1z" fill="#c5e8ee" /><path d="M18 3l4 1-3 20-6-2z" fill="#dce4e4" /><path d="M7 1.500l14 1" stroke="#e3eaec" strokeWidth="1.500" strokeDasharray="1 1" /></svg>
      </Cell>
      <Cell w="w-[49px]">
        <svg width="25" height="16" viewBox="0 0 25 16" fill="none" strokeWidth="3">
          <defs><linearGradient id="inf"><stop stopColor="#33a0bd" /><stop offset="1" stopColor="#9ccb4b" /></linearGradient></defs>
          <path d="M11 11Q9 14 6.500 14a5.500 5.500 0 1 1 1-11C13 3 14 13 19 13a4 4 0 1 0 0-8q-3 0-6 4" stroke="url(#inf)" />
        </svg>
      </Cell>
      <Cell w="w-[50px]" under="w-[40px] bg-[#76b9ed]">
        <svg width="23" height="24" viewBox="0 0 23 24"><path d="M10 3h12v18H10z" fill="#fff" stroke="#2b579a" /><path d="M13 6.500h7M13 9.500h7M13 12.500h7M13 15.500h7M13 18.500h7" stroke="#2b579a" strokeWidth="1.300" /><path d="M0 2l13-2v24L0 22z" fill="#2b579a" /><path d="M2.500 8l2 8 2-7 2 7 2-8" fill="none" stroke="#fff" strokeWidth="1.500" /></svg>
      </Cell>
      <svg className="ml-auto shrink-0" width="30" height="30" viewBox="0 0 30 30">
        <circle cx="12" cy="17" r="11" fill="#fff" /><circle cx="12" cy="17" r="9" fill="#1399d4" />
        <path d="M8.500 15q0-4 3.500-4t3.500 3.300q0 2-2 3-1.500.7-1.500 2.500M12 21.500v2.500" fill="none" stroke="#fff" strokeWidth="2.400" />
        <path d="M20 0l9.500 17h-19z" fill="#fbb11b" /><path d="M20 5v6.500M20 13v2.500" stroke="#fff" strokeWidth="2.400" />
      </svg>
      <svg className="ml-[18px] shrink-0" width="16" height="18" viewBox="0 0 16 18" fill="none" stroke="#fff" strokeWidth="1.200"><circle cx="10.500" cy="4.500" r="3" /><circle cx="5" cy="8.500" r="2.500" /><path d="M.7 16q.5-5 4.300-5 3.500 0 4 5M8.500 9q5.500-3 6.500 3.500" /></svg>
      <svg className="ml-[22px] shrink-0" width="12" height="8" fill="none" stroke="#fff" strokeWidth="1.300"><path d="M.7 7L6 1.500 11.300 7" /></svg>
      <svg className="ml-[10px] shrink-0" width="17" height="11" viewBox="0 0 17 11"><path d="M1 8q0-3 3-3 1-5 5-5 3 0 4 3 4 0 4 4t-3 4H4Q1 11 1 8z" fill="#0b72d2" /><path d="M4 10q0-4 4-4" stroke="#2c2f33" fill="none" strokeWidth=".8" /></svg>
      <svg className="ml-[7px] shrink-0" width="17" height="13" viewBox="0 0 17 13" fill="none" stroke="#fff" strokeWidth="1.200"><path d="M6 3.500h8.500v7H4M14.500 5.500h1.500v3h-1.500M2 0v2M4.500 0v2M.8 2.500h5v1.500q0 2-2.500 2T.8 4zM3.300 6v5" /><path d="M7 5.500h6v3.500H6.500z" fill="#fff" stroke="none" /></svg>
      <svg className="ml-[7px] shrink-0" width="17" height="14" viewBox="0 0 17 14" fill="none" stroke="#fff" strokeWidth="1.200"><path d="M6 1.500h10v8H5.500M10.500 9.500V13M7 13h7M.8.800h4.500v4H.8zM3 5v7M3 12.500h3" /></svg>
      <svg className="ml-[7px] shrink-0" width="16" height="13" viewBox="0 0 16 13" fill="none" stroke="#fff" strokeWidth="1.200"><path d="M1 4h2.500L7 1v11L3.500 9H1zM10 4.500l4.500 4.500M14.500 4.500L10 9" /></svg>
      <span className="ml-[12px] w-[24px] whitespace-nowrap font-['Open_Sans',sans-serif] text-[12px] leading-[18px] tracking-[-0.7px]">ESP</span>
      <span className="ml-[6px] flex w-[66px] flex-col items-center whitespace-nowrap font-['Open_Sans',sans-serif] text-[12px] leading-[18px] tracking-[-0.5px]">
        <span>18:05</span><span>22-03-2019</span>
      </span>
      <svg className="ml-[14px] shrink-0" width="17" height="16" viewBox="0 0 17 16"><path d="M0 0h16v11h-8l-3 3v-3H0z" fill="#fff" /><path d="M2.500 3h11M2.500 5.500h11M2.500 8h6" stroke="#262a31" /><path d="M11 15q-3-3 1-5 0-3 2-2 3 2 2 5-1 3-5 2z" fill="#262a31" stroke="#fff" /></svg>
      <span className="ml-[19px] mr-[4px] h-[40px] w-px bg-[#70747b]" />
    </div>
  );
}

export default function App() {
  return (
    <div className="flex h-[768px] w-[1366px] flex-col overflow-hidden bg-[#e6e6e6]">
      <TabStrip />
      <Toolbar />
      <Bookmarks />
      <div className="relative flex h-[625px] shrink-0 overflow-hidden">
        <div className="flex w-[1349px] flex-col">
          <Header />
          <div className="flex">
            <Sidebar />
            <Form />
          </div>
        </div>
        <div className="flex w-[17px] flex-col items-center bg-[#f1f1f1]">
          <span className="flex h-[17px] items-center"><Arrow dir="up" dim /></span>
          <span className="h-[520px] w-[13px] bg-[#c1c1c1]" />
          <span className="mb-[5px] mt-auto"><Arrow dir="down" /></span>
        </div>
        <Popup />
      </div>
      <Taskbar />
    </div>
  );
}
